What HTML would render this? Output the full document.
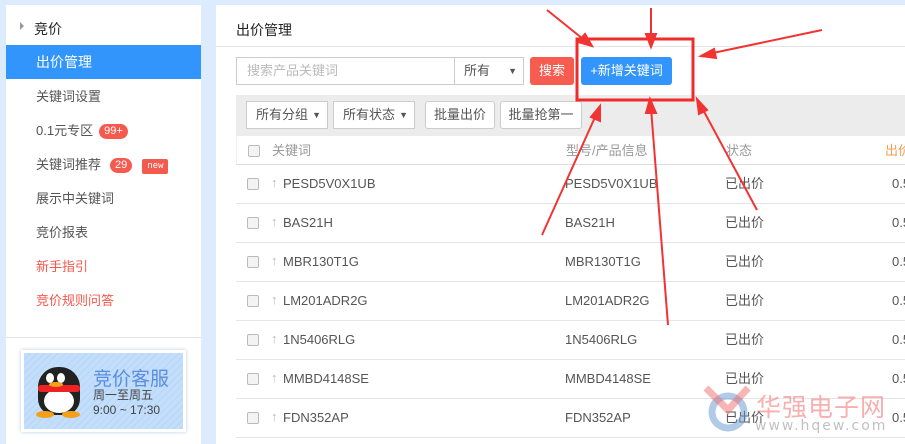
<!DOCTYPE html>
<html><head><meta charset="utf-8"><style>
*{margin:0;padding:0;box-sizing:border-box}
body{width:905px;height:444px;background:#dcebfd;font-family:"Liberation Sans","Noto Sans CJK SC",sans-serif;font-size:13px;color:#555;position:relative;overflow:hidden}
.side{position:absolute;left:6px;top:5px;width:195px;height:439px;background:#fff}
.it{position:absolute;left:30px;font-size:13px;color:#555;line-height:16px}
.badge{display:inline-block;background:#f55a4e;color:#fff;border-radius:8px;font-size:11px;padding:0 5px;line-height:15px;margin-left:6px;vertical-align:1px}
.main{position:absolute;left:216px;top:5px;width:700px;height:439px;background:#fff}
.abs{position:absolute}
.row{position:absolute;left:236px;width:680px;height:39px;border-bottom:1px solid #e5e5e5}
.row span{line-height:16px}
.cb{position:absolute;left:11px;top:13px;width:12px;height:12px;border:1px solid #bbb;border-radius:2px;background:#f3f3f3}
.sel{position:absolute;height:28px;border:1px solid #ccc;background:#fff;font-size:13px;line-height:26px;padding-left:9px;color:#555}
.btn{position:absolute;height:28px;border:1px solid #ccc;border-radius:3px;background:#fff;line-height:26px;text-align:center;color:#555}
.st{left:489px;top:11px}
</style></head><body>
<div class="side">
<div class="abs" style="left:14px;top:17px;width:0;height:0;border-left:4px solid #999;border-top:4px solid transparent;border-bottom:4px solid transparent"></div>
<div class="abs" style="left:28px;top:14px;font-size:14px;color:#222">竞价</div>
<div class="abs" style="left:0;top:40px;width:195px;height:34px;background:#3295fc;color:#fff;font-size:14px;line-height:34px;padding-left:30px">出价管理</div>
<div class="it" style="top:84px">关键词设置</div>
<div class="it" style="top:118px">0.1元专区<span class="badge">99+</span></div>
<div class="it" style="top:152px">关键词推荐<span class="badge" style="margin-left:9px">29</span><span class="badge" style="margin-left:10px;border-radius:2px;font-size:9px;font-family:'Liberation Mono',monospace">new</span></div>
<div class="it" style="top:186px">展示中关键词</div>
<div class="it" style="top:220px">竞价报表</div>
<div class="it" style="top:254px;color:#f5574a">新手指引</div>
<div class="it" style="top:288px;color:#f5574a">竞价规则问答</div>
<div class="abs" style="left:0;top:332px;width:195px;height:1px;background:#e5e5e5"></div>
<div class="abs" style="left:15px;top:345px;width:165px;height:82px;background:#fff;box-shadow:0 0 4px #bcd;padding:3px">
<div style="width:159px;height:76px;background:repeating-linear-gradient(135deg,#c2defb 0 4px,#b6d6f8 4px 5px);position:relative">
<div class="abs" style="left:14px;top:14px;width:42px;height:48px;border-radius:20px 20px 16px 16px;background:#222"></div>
<div class="abs" style="left:20px;top:36px;width:30px;height:24px;border-radius:50%;background:#fff"></div>
<div class="abs" style="left:14px;top:32px;width:42px;height:7px;background:#e22;border-radius:3px"></div>
<div class="abs" style="left:22px;top:20px;width:8px;height:10px;border-radius:50%;background:#fff"></div>
<div class="abs" style="left:33px;top:20px;width:8px;height:10px;border-radius:50%;background:#fff"></div>
<div class="abs" style="left:25px;top:29px;width:14px;height:5px;border-radius:50%;background:#f4a11a"></div>
<div class="abs" style="left:12px;top:58px;width:18px;height:7px;border-radius:50%;background:#f4a11a"></div>
<div class="abs" style="left:38px;top:58px;width:18px;height:7px;border-radius:50%;background:#f4a11a"></div>
<div class="abs" style="left:69px;top:11px;font-size:19px;color:#5b8de0">竞价客服</div>
<div class="abs" style="left:69px;top:35px;font-size:12px;color:#444;line-height:15px">周一至周五<br>9:00 ~ 17:30</div>
</div></div>
</div>
<div class="main">
<div class="abs" style="left:20px;top:15px;font-size:14px;color:#222">出价管理</div>
<div class="abs" style="left:0;top:41px;width:700px;height:1px;background:#e5e5e5"></div>
</div>
<div class="abs" style="left:236px;top:57px;width:219px;height:28px;border:1px solid #ccc;color:#bbb;line-height:26px;padding-left:10px">搜索产品关键词</div>
<div class="sel" style="left:454px;top:57px;width:70px">所有<span style="position:absolute;right:6px;font-size:9px">▼</span></div>
<div class="abs" style="left:530px;top:57px;width:44px;height:28px;background:#f65c4f;color:#fff;border-radius:3px;text-align:center;line-height:28px">搜索</div>
<div class="abs" style="left:581px;top:57px;width:91px;height:28px;background:#3295fc;color:#fff;border-radius:3px;text-align:center;line-height:28px">+新增关键词</div>
<div class="abs" style="left:236px;top:95px;width:680px;height:41px;background:#ececec"></div>
<div class="sel" style="left:246px;top:101px;width:82px">所有分组<span style="position:absolute;right:6px;font-size:9px">▼</span></div>
<div class="sel" style="left:333px;top:101px;width:82px">所有状态<span style="position:absolute;right:6px;font-size:9px">▼</span></div>
<div class="btn" style="left:425px;top:101px;width:70px">批量出价</div>
<div class="btn" style="left:500px;top:101px;width:82px">批量抢第一</div>
<div class="row" style="top:136px;height:29px;border-bottom:1px solid #ddd;border-left:1px solid #eee"><div class="cb" style="top:9px"></div><span class="abs" style="left:35px;top:7px;color:#999">关键词</span><span class="abs" style="left:329px;top:7px;color:#999">型号/产品信息</span><span class="abs" style="left:489px;top:7px;color:#999">状态</span><span class="abs" style="left:648px;top:7px;color:#f0a050">出价</span></div>
<div class="row" style="top:165px"><div class="cb"></div><span class="abs" style="left:35px;top:10px;color:#bbb">↑</span><span class="abs" style="left:47px;top:11px">PESD5V0X1UB</span><span class="abs" style="left:329px;top:11px">PESD5V0X1UB</span><span class="abs st">已出价</span><span class="abs" style="left:656px;top:11px">0.5</span></div>
<div class="row" style="top:204px"><div class="cb"></div><span class="abs" style="left:35px;top:10px;color:#bbb">↑</span><span class="abs" style="left:47px;top:11px">BAS21H</span><span class="abs" style="left:329px;top:11px">BAS21H</span><span class="abs st">已出价</span><span class="abs" style="left:656px;top:11px">0.5</span></div>
<div class="row" style="top:243px"><div class="cb"></div><span class="abs" style="left:35px;top:10px;color:#bbb">↑</span><span class="abs" style="left:47px;top:11px">MBR130T1G</span><span class="abs" style="left:329px;top:11px">MBR130T1G</span><span class="abs st">已出价</span><span class="abs" style="left:656px;top:11px">0.5</span></div>
<div class="row" style="top:282px"><div class="cb"></div><span class="abs" style="left:35px;top:10px;color:#bbb">↑</span><span class="abs" style="left:47px;top:11px">LM201ADR2G</span><span class="abs" style="left:329px;top:11px">LM201ADR2G</span><span class="abs st">已出价</span><span class="abs" style="left:656px;top:11px">0.5</span></div>
<div class="row" style="top:321px"><div class="cb"></div><span class="abs" style="left:35px;top:10px;color:#bbb">↑</span><span class="abs" style="left:47px;top:11px">1N5406RLG</span><span class="abs" style="left:329px;top:11px">1N5406RLG</span><span class="abs st">已出价</span><span class="abs" style="left:656px;top:11px">0.5</span></div>
<div class="row" style="top:360px"><div class="cb"></div><span class="abs" style="left:35px;top:10px;color:#bbb">↑</span><span class="abs" style="left:47px;top:11px">MMBD4148SE</span><span class="abs" style="left:329px;top:11px">MMBD4148SE</span><span class="abs st">已出价</span><span class="abs" style="left:656px;top:11px">0.5</span></div>
<div class="row" style="top:399px"><div class="cb"></div><span class="abs" style="left:35px;top:10px;color:#bbb">↑</span><span class="abs" style="left:47px;top:11px">FDN352AP</span><span class="abs" style="left:329px;top:11px">FDN352AP</span><span class="abs st">已出价</span><span class="abs" style="left:656px;top:11px">0.5</span></div>
<div class="abs" style="left:756px;top:388px;font-size:25px;color:rgba(240,110,110,.55);letter-spacing:1px">华强电子网</div>
<div class="abs" style="left:755px;top:418px;font-size:14px;color:rgba(140,140,140,.55);font-family:'DejaVu Sans',sans-serif;letter-spacing:2px">www.hqew.com</div>
<svg class="abs" style="left:0;top:0" width="905" height="444">
<circle cx="728" cy="412" r="16" fill="none" stroke="rgba(100,150,210,.5)" stroke-width="7"/>
<path d="M706 388 L728 410 L748 388" fill="none" stroke="rgba(240,110,110,.5)" stroke-width="7"/>
<rect x="577" y="39" width="116" height="61" fill="none" stroke="#f02b2b" stroke-width="3"/>
<g stroke="#f23333" stroke-width="2" fill="#f23333">
<line x1="547" y1="10" x2="588" y2="43"/><polygon points="592,46 578,42 585,34"/>
<line x1="651" y1="8" x2="651" y2="40"/><polygon points="651,47 646,34 656,34"/>
<line x1="822" y1="30" x2="708" y2="54"/><polygon points="701,56 714,49 716,58"/>
<line x1="542" y1="235" x2="596" y2="115"/><polygon points="600,106 600,121 591,117"/>
<line x1="668" y1="325" x2="651" y2="108"/><polygon points="650,99 656,113 646,113"/>
<line x1="757" y1="210" x2="701" y2="106"/><polygon points="697,99 707,110 699,114"/>
</g></svg>
</body></html>
